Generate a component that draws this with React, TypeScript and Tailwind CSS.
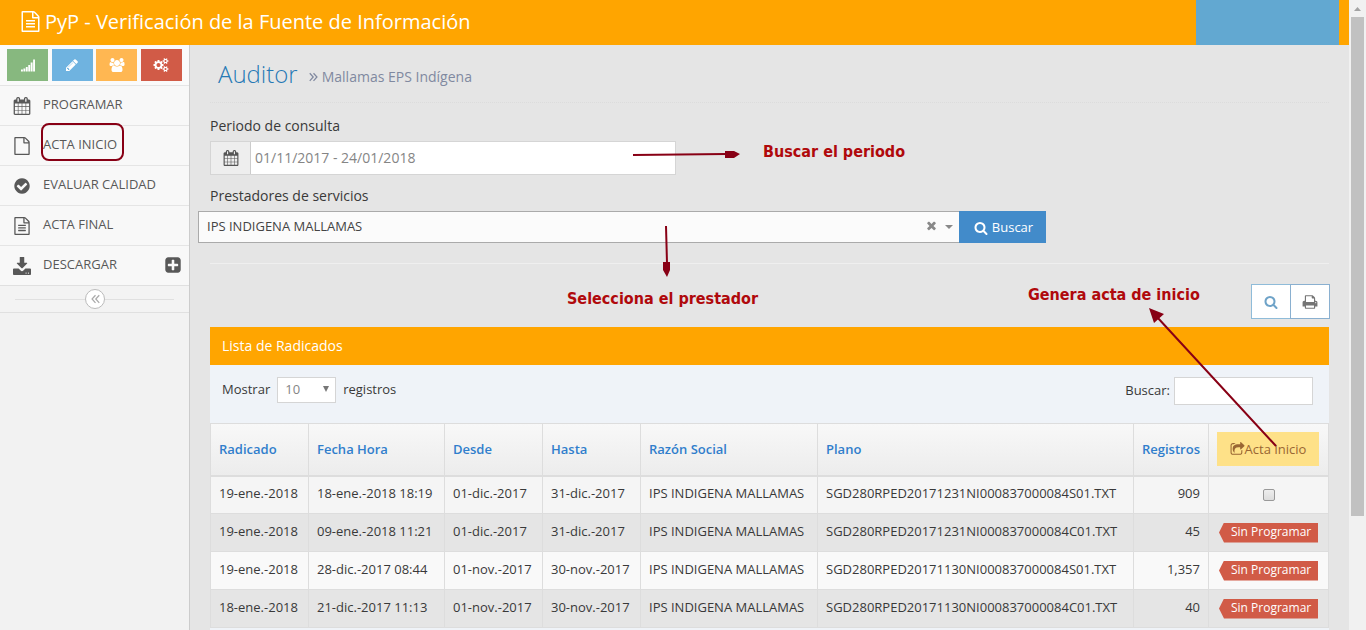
import React from "react";

const FILE =
  "M1596 380q28 28 48 76t20 88v1152q0 40-28 68t-68 28h-1344q-40 0-68-28t-28-68v-1600q0-40 28-68t68-28h896q40 0 88 20t76 48zm-444-244v376h376q-10-29-22-41l-313-313q-12-12-41-22zm384 1528v-1024h-416q-40 0-68-28t-28-68v-416h-768v1536h1280z";

const PATHS = {
  calendar:
    "M192 1664h288v-288h-288v288zm352 0h320v-288h-320v288zm-352-352h288v-320h-288v320zm352 0h320v-320h-320v320zm-352-384h288v-288h-288v288zm736 736h320v-288h-320v288zm-384-736h320v-288h-320v288zm768 736h288v-288h-288v288zm-384-352h320v-320h-320v320zm-352-864v-288q0-13-9.5-22.5t-22.5-9.5h-64q-13 0-22.5 9.5t-9.5 22.5v288q0 13 9.5 22.5t22.5 9.5h64q13 0 22.5-9.5t9.5-22.5zm736 864h288v-320h-288v320zm-384-384h320v-288h-320v288zm384 0h288v-288h-288v288zm32-480v-288q0-13-9.5-22.5t-22.5-9.5h-64q-13 0-22.5 9.5t-9.5 22.5v288q0 13 9.5 22.5t22.5 9.5h64q13 0 22.5-9.5t9.5-22.5zm384-64v1280q0 52-38 90t-90 38h-1408q-52 0-90-38t-38-90v-1280q0-52 38-90t90-38h128v-96q0-66 47-113t113-47h64q66 0 113 47t47 113v96h384v-96q0-66 47-113t113-47h64q66 0 113 47t47 113v96h128q52 0 90 38t38 90z",
  file: FILE,
  fileText:
    FILE +
    "m-1024-864q0-14 9-23t23-9h704q14 0 23 9t9 23v64q0 14-9 23t-23 9h-704q-14 0-23-9t-9-23v-64zm736 224q14 0 23 9t9 23v64q0 14-9 23t-23 9h-704q-14 0-23-9t-9-23v-64q0-14 9-23t23-9h704zm0 256q14 0 23 9t9 23v64q0 14-9 23t-23 9h-704q-14 0-23-9t-9-23v-64q0-14 9-23t23-9h704z",
  check:
    "M1412 734q0-28-18-46l-91-90q-19-19-45-19t-45 19l-408 407-226-226q-19-19-45-19t-45 19l-91 90q-18 18-18 46 0 27 18 45l362 362q19 19 45 19 27 0 46-19l543-543q18-18 18-45zm252 162q0 209-103 385.5t-279.5 279.5-385.5 103-385.5-103-279.5-279.5-103-385.5 103-385.5 279.5-279.5 385.5-103 385.5 103 279.5 279.5 103 385.5z",
  search:
    "M1216 832q0-185-131.5-316.5t-316.5-131.5-316.5 131.5-131.5 316.5 131.5 316.5 316.5 131.5 316.5-131.5 131.5-316.5zm512 832q0 52-38 90t-90 38q-54 0-90-38l-343-342q-179 124-399 124-143 0-273.5-55.5t-225-150-150-225-55.5-273.5 55.5-273.5 150-225 225-150 273.5-55.5 273.5 55.5 225 150 150 225 55.5 273.5q0 220-124 399l343 343q37 37 37 90z",
  print:
    "M448 1536h896v-256h-896v256zm0-640h896v-384h-160q-40 0-68-28t-28-68v-160h-640v640zm1152 64q0-26-19-45t-45-19-45 19-19 45 19 45 45 19 45-19 19-45zm128 0v416q0 13-9.5 22.5t-22.5 9.5h-224v160q0 40-28 68t-68 28h-960q-40 0-68-28t-28-68v-160h-224q-13 0-22.5-9.5t-9.5-22.5v-416q0-79 56.5-135.5t135.5-56.5h64v-544q0-40 28-68t68-28h672q40 0 88 20t76 48l152 152q28 28 48 76t20 88v256h64q79 0 135.5 56.5t56.5 135.5z",
  pencil:
    "M491 1536l91-91-235-235-91 91v107h128v128h107zm523-928q0-22-22-22-10 0-17 7l-542 542q-7 7-7 17 0 22 22 22 10 0 17-7l542-542q7-7 7-17zm-54-192l416 416-832 832h-416v-416zm683 96q0 53-37 90l-166 166-416-416 166-165q36-38 90-38 53 0 91 38l235 234q37 39 37 91z",
  share:
    "M1472 989v259q0 119-84.5 203.5t-203.5 84.5h-832q-119 0-203.5-84.5t-84.5-203.5v-832q0-119 84.5-203.5t203.5-84.5h255q13 0 22.5 9.5t9.5 22.5q0 27-26 32-77 26-133 60-10 4-16 4h-112q-66 0-113 47t-47 113v832q0 66 47 113t113 47h832q66 0 113-47t47-113v-214q0-19 18-29 28-13 54-37 16-16 35-8 21 9 21 29zm237-496l-384 384q-18 19-45 19-12 0-25-5-39-17-39-59v-192h-160q-323 0-438 131-119 137-74 473 3 23-20 34-8 2-12 2-16 0-26-13-10-14-21-31t-39.5-68.5-49.5-99.5-38.5-114-17.5-122q0-49 3.5-91t14-90 28-88 47-81.5 68.5-74 94.5-61.5 124.5-48.5 159.5-30.5 196.5-11h160v-192q0-42 39-59 13-5 25-5 26 0 45 19l384 384q19 19 19 45t-19 45z",
  plus:
    "M1408 960v-128q0-26-19-45t-45-19h-320v-320q0-26-19-45t-45-19h-128q-26 0-45 19t-19 45v320h-320q-26 0-45 19t-19 45v128q0 26 19 45t45 19h320v320q0 26 19 45t45 19h128q26 0 45-19t19-45v-320h320q26 0 45-19t19-45zm256-544v960q0 119-84.5 203.5t-203.5 84.5h-960q-119 0-203.5-84.5t-84.5-203.5v-960q0-119 84.5-203.5t203.5-84.5h960q119 0 203.5 84.5t84.5 203.5z",
  times:
    "M1490 1322q0 40-28 68l-136 136q-28 28-68 28t-68-28l-294-294-294 294q-28 28-68 28t-68-28l-136-136q-28-28-28-68t28-68l294-294-294-294q-28-28-28-68t28-68l136-136q28-28 68-28t68 28l294 294 294-294q28-28 68-28t68 28l136 136q28 28 28 68t-28 68l-294 294 294 294q28 28 28 68z",
  download:
    "M704 0h384q32 0 32 32v544h256q28 0 38 22t-10 46l-464 464q-44 40-88 0l-464-464q-20-24-10-46t38-22h256v-544q0-32 32-32zM96 1152h464l200 200q58 56 136 56t136-56l200-200h464q40 0 68 28t28 68v448q0 40-28 68t-68 28h-1600q-40 0-68-28t-28-68v-448q0-40 28-68t68-28zm1204 384a60 60 0 1 0 0 128a60 60 0 1 0 0-128zm240 0a60 60 0 1 0 0 128a60 60 0 1 0 0-128z",
  signal:
    "M0 1472h240v256h-240zM310 1344h240v384h-240zM620 1152h240v576h-240zM930 896h240v832h-240zM1240 576h240v1152h-240zM1550 192h240v1536h-240z",
  angles:
    "M900 250L330 896L900 1542L1040 1400L590 896L1040 392zM1460 250L890 896L1460 1542L1600 1400L1150 896L1600 392z",
  cogs:
    "M896 896q0-106-75-181t-181-75-181 75-75 181 75 181 181 75 181-75 75-181zm768 512q0-52-38-90t-90-38-90 38-38 90q0 53 37.5 90.5t90.5 37.5 90.5-37.5 37.5-90.5zm0-1024q0-52-38-90t-90-38-90 38-38 90q0 53 37.5 90.5t90.5 37.5 90.5-37.5 37.5-90.5zm-384 421v185q0 10-7 19.5t-16 10.5l-155 24q-11 35-32 76 34 48 90 115 7 11 7 20 0 12-7 19-23 30-82.5 89.5t-78.5 59.5q-11 0-21-7l-115-90q-37 19-77 31-11 108-23 155-7 24-30 24h-186q-11 0-20-7.5t-10-17.5l-23-153q-34-10-75-31l-118 89q-7 7-20 7-11 0-21-8-144-133-144-160 0-9 7-19 10-14 41-53t47-61q-23-44-35-82l-152-24q-10-1-17-9.5t-7-19.5v-185q0-10 7-19.5t16-10.5l155-24q11-35 32-76-34-48-90-115-7-11-7-20 0-12 7-20 22-30 82-89t79-59q11 0 21 7l115 90q34-18 77-32 11-108 23-154 7-24 30-24h186q11 0 20 7.5t10 17.5l23 153q34 10 75 31l118-89q8-7 20-7 11 0 21 8 144 133 144 160 0 8-7 19-12 16-42 54t-45 60q23 48 34 82l152 23q10 2 17 10.5t7 19.5zm640 533v140q0 16-149 31-12 27-30 52 51 113 51 138 0 4-4 7-122 71-124 71-8 0-46-47t-52-68q-20 2-30 2t-30-2q-14 21-52 68t-46 47q-2 0-124-71-4-3-4-7 0-25 51-138-18-25-30-52-149-15-149-31v-140q0-16 149-31 13-29 30-52-51-113-51-138 0-4 4-7 4-2 35-20t59-34 30-16q8 0 46 46.5t52 67.5q20-2 30-2t30 2q51-71 92-112l6-2q4 0 124 70 4 3 4 7 0 25-51 138 17 23 30 52 149 15 149 31zm0-1024v140q0 16-149 31-12 27-30 52 51 113 51 138 0 4-4 7-122 71-124 71-8 0-46-47t-52-68q-20 2-30 2t-30-2q-14 21-52 68t-46 47q-2 0-124-71-4-3-4-7 0-25 51-138-18-25-30-52-149-15-149-31v-140q0-16 149-31 13-29 30-52-51-113-51-138 0-4 4-7 4-2 35-20t59-34 30-16q8 0 46 46.5t52 67.5q20-2 30-2t30 2q51-71 92-112l6-2q4 0 124 70 4 3 4 7 0 25-51 138 17 23 30 52 149 15 149 31z",
  users:
    "M593 896q-162 5-265 128h-134q-82 0-138-40.5t-56-118.5q0-353 124-353 6 0 43.5 21t97.5 42.5 119 21.5q67 0 133-23-5 37-5 66 0 159 93 287zm1071 637q0 120-73 189.5t-194 69.5h-874q-121 0-194-69.5t-73-189.5q0-53 3.5-103.5t14-109 26.5-108.5 43-97.5 62-81 85.5-53.5 111.5-20q10 0 43 21.5t73 48 107 48 135 21.5 135-21.5 107-48 73-48 43-21.5q61 0 111.5 20t85.5 53.5 62 81 43 97.5 26.5 108.5 14 109 3.5 103.5zm-1024-1277q0 106-75 181t-181 75-181-75-75-181 75-181 181-75 181 75 75 181zm704 384q0 159-112.5 271.5t-271.5 112.5-271.5-112.5-112.5-271.5 112.5-271.5 271.5-112.5 271.5 112.5 112.5 271.5zm576 225q0 78-56 118.5t-138 40.5h-134q-103-123-265-128 93-128 93-287 0-29-5-66 66 23 133 23 59 0 119-21.5t97.5-42.5 43.5-21q124 0 124 353zm-128-609q0 106-75 181t-181 75-181-75-75-181 75-181 181-75 181 75 75 181z",
};

type IconName = keyof typeof PATHS;

function Icon({ name, className }: { name: IconName; className: string }) {
  const wide = name === "cogs" || name === "users";
  return (
    <svg
      viewBox={wide ? "0 0 1920 1792" : "0 0 1792 1792"}
      fill="currentColor"
      fillRule={name === "download" ? "evenodd" : "nonzero"}
      className={`shrink-0 ${className}`}
      aria-hidden="true"
    >
      <path d={PATHS[name]} />
    </svg>
  );
}

const shortcuts: { icon: IconName; label: string; color: string }[] = [
  { icon: "signal", label: "Estadísticas", color: "bg-[#87b87f]" },
  { icon: "pencil", label: "Editar", color: "bg-[#6fb3e0]" },
  { icon: "users", label: "Usuarios", color: "bg-[#ffb752]" },
  { icon: "cogs", label: "Configuración", color: "bg-[#d15b47]" },
];

const menu: { icon: IconName; label: string }[] = [
  { icon: "calendar", label: "PROGRAMAR" },
  { icon: "file", label: "ACTA INICIO" },
  { icon: "check", label: "EVALUAR CALIDAD" },
  { icon: "fileText", label: "ACTA FINAL" },
  { icon: "download", label: "DESCARGAR" },
];

const rows = [
  ["19-ene.-2018", "18-ene.-2018 18:19", "01-dic.-2017", "31-dic.-2017", "IPS INDIGENA MALLAMAS", "SGD280RPED20171231NI000837000084S01.TXT", "909"],
  ["19-ene.-2018", "09-ene.-2018 11:21", "01-dic.-2017", "31-dic.-2017", "IPS INDIGENA MALLAMAS", "SGD280RPED20171231NI000837000084C01.TXT", "45"],
  ["19-ene.-2018", "28-dic.-2017 08:44", "01-nov.-2017", "30-nov.-2017", "IPS INDIGENA MALLAMAS", "SGD280RPED20171130NI000837000084S01.TXT", "1,357"],
  ["18-ene.-2018", "21-dic.-2017 11:13", "01-nov.-2017", "30-nov.-2017", "IPS INDIGENA MALLAMAS", "SGD280RPED20171130NI000837000084C01.TXT", "40"],
];
const rowColors = ["bg-[#f5f5f5]", "bg-[#e5e5e5]", "bg-[#f9f9f9]", "bg-[#e5e5e5]"];
const headings = ["Radicado", "Fecha Hora", "Desde", "Hasta", "Razón Social", "Plano", "Registros"];

function Sidebar() {
  return (
    <nav className="w-[190px] shrink-0 border-r border-[#ccc] bg-[#f2f2f2]">
      <div className="flex h-10 items-center justify-between bg-[#fafafa] px-[7px]">
        {shortcuts.map((s) => (
          <button key={s.label} aria-label={s.label} className={`flex h-8 w-[41px] items-center justify-center text-white ${s.color}`}>
            <Icon name={s.icon} className={s.icon === "users" || s.icon === "cogs" ? "h-[14px] w-4" : "h-[14px] w-[14px]"} />
          </button>
        ))}
      </div>
      <ul>
        {menu.map((m) => (
          <li key={m.label} className="border-t border-[#e5e5e5] bg-[#f8f8f8]">
            <a href="#" className="flex h-[39px] items-center pr-[7px] pb-px pl-[13px] text-[13px] text-[#585858]">
              <Icon name={m.icon} className="mt-px h-[18px] w-[18px]" />
              <span className="ml-3 flex-1">{m.label}</span>
              {m.label === "DESCARGAR" && <Icon name="plus" className="h-[18px] w-[18px]" />}
            </a>
          </li>
        ))}
      </ul>
      <div className="flex h-7 items-center border-y border-[#e0e0e0] bg-[#f3f3f3] px-[15px]">
        <span className="h-px flex-1 bg-[#e0e0e0]" />
        <button aria-label="Contraer menú" className="flex h-5 w-5 items-center justify-center rounded-full border border-[#bbb] bg-white text-[#aaa]">
          <Icon name="angles" className="h-3 w-3" />
        </button>
        <span className="h-px flex-1 bg-[#e0e0e0]" />
      </div>
    </nav>
  );
}

function Filters() {
  return (
    <form>
      <label htmlFor="periodo" className="block h-[22px] text-sm leading-[22px]">Periodo de consulta</label>
      <div className="mt-1 flex h-[34px] w-[466px] border border-[#d5d5d5]">
        <span className="flex w-10 items-center justify-center border-r border-[#ccc] bg-[#eee] pb-px text-[#555]">
          <Icon name="calendar" className="h-4 w-4" />
        </span>
        <input id="periodo" defaultValue="01/11/2017 - 24/01/2018" className="min-w-0 flex-1 bg-white px-1 text-sm text-[#858585] outline-none" />
      </div>
      <label htmlFor="prestador" className="mt-[10px] block h-[22px] text-sm leading-[22px]">Prestadores de servicios</label>
      <div className="mt-1 -ml-3 flex h-8 w-[848px]">
        <div className="relative flex flex-1">
          <select id="prestador" className="w-full appearance-none border border-r-0 border-[#aaa] bg-[#fbfbfb] px-2 text-[13px] text-[#444]">
            <option>IPS INDIGENA MALLAMAS</option>
          </select>
          <div className="pointer-events-none absolute inset-y-0 right-[6px] flex items-center gap-[7px] text-[#888]">
            <button type="button" aria-label="Quitar prestador" className="pointer-events-auto pb-1">
              <Icon name="times" className="h-[13px] w-[13px]" />
            </button>
            <svg viewBox="0 0 8 4" className="h-1 w-2 fill-current" aria-hidden="true"><path d="M0 0h8L4 4z" /></svg>
          </div>
        </div>
        <button type="button" className="flex w-[87px] items-center justify-center gap-1 bg-[#428bca] pt-px pl-[2px] text-[13px] text-white">
          <Icon name="search" className="h-[14px] w-[14px]" />
          Buscar
        </button>
      </div>
    </form>
  );
}

function Records() {
  return (
    <section>
      <h2 className="h-[38px] bg-[#ffa500] pl-3 text-sm leading-[38px] text-white">Lista de Radicados</h2>
      <div className="flex h-[58px] items-start justify-between bg-[#eff3f8] pt-3 pr-4 pl-3 text-[13px]">
        <label className="flex items-center gap-[7px]">
          Mostrar
          <span className="relative flex">
            <select className="h-[26px] w-[59px] appearance-none border border-[#d5d5d5] bg-white px-[7px] text-[13px] text-[#858585]">
              <option>10</option>
            </select>
            <svg viewBox="0 0 6 6" className="pointer-events-none absolute top-[9px] right-[7px] h-[6px] w-[6px] fill-[#777]" aria-hidden="true"><path d="M0 0h6L3 6z" /></svg>
          </span>
          registros
        </label>
        <label className="flex items-center gap-1">
          Buscar:
          <input className="h-7 w-[139px] border border-[#d5d5d5] bg-white px-1 outline-none" />
        </label>
      </div>
      <table className="w-full table-fixed border-collapse bg-[#eff3f8] text-[13px] text-[#393939]">
        <colgroup>
          <col className="w-[98px]" />
          <col className="w-[136px]" />
          <col className="w-[98px]" />
          <col className="w-[98px]" />
          <col className="w-[177px]" />
          <col />
          <col className="w-[75px]" />
          <col className="w-[120px]" />
        </colgroup>
        <thead>
          <tr className="h-[52px] bg-linear-to-b from-[#f8f8f8] to-[#ececec]">
            {headings.map((h) => (
              <th key={h} className="border border-b-2 border-[#ddd] px-2 text-left font-semibold text-[#307ecc]">{h}</th>
            ))}
            <th className="border border-b-2 border-[#ddd] px-2 font-normal">
              <button className="flex h-[34px] w-[102px] items-center justify-center bg-[#fee188] text-[#996633]">
                <Icon name="share" className="h-[15px] w-[15px]" />
                Acta Inicio
              </button>
            </th>
          </tr>
        </thead>
        <tbody>
          {rows.map((r, i) => (
            <tr key={r[5]} className={`h-[38px] ${rowColors[i]}`}>
              {r.map((c, j) => (
                <td key={j} className={`border border-[#ddd] px-2 pb-[2px] whitespace-nowrap ${j === 6 ? "text-right" : ""}`}>{c}</td>
              ))}
              <td className="border border-[#ddd] px-[10px]">
                {i === 0 ? (
                  <input type="checkbox" aria-label="Seleccionar radicado" className="mx-auto block h-3 w-3 appearance-none rounded-xs border border-[#999] bg-linear-to-b from-[#eee] to-[#ddd]" />
                ) : (
                  <span className="flex h-5 items-center bg-[#d15b47] pb-[2px] pl-3 text-xs whitespace-nowrap text-white [clip-path:polygon(5px_0,100%_0,100%_100%,5px_100%,0_50%)]">Sin Programar</span>
                )}
              </td>
            </tr>
          ))}
        </tbody>
      </table>
      <div className="h-10 bg-[#eff3f8]" />
    </section>
  );
}

function Annotations() {
  return (
    <div className="pointer-events-none absolute inset-0 font-['DejaVu_Sans_Condensed','DejaVu_Sans',sans-serif] text-base leading-5 font-bold whitespace-nowrap text-[#b0090c]">
      <div className="absolute top-[123px] left-[41px] h-[38px] w-[83px] rounded-lg border-2 border-[#880015]" />
      <svg className="absolute top-0 left-0 h-[630px] w-[1349px]" fill="#880015" stroke="#880015" strokeWidth="2" aria-hidden="true">
        <path d="M633 155L726 154M666 226L667 263M1276 446L1157 317" />
        <path stroke="none" d="M725 151h9l6 3l-6 4h-9zM663 262h7v8l-3 7l-4-7zM1149 308l15 6l-10 9z" />
      </svg>
      <p className="absolute top-[142px] left-[763px]">Buscar el periodo</p>
      <p className="absolute top-[289px] left-[567px]">Selecciona el prestador</p>
      <p className="absolute top-[285px] left-[1028px]">Genera acta de inicio</p>
    </div>
  );
}

export default function App() {
  return (
    <div className="relative flex h-screen overflow-hidden bg-[#e5e5e5] font-['Open_Sans',sans-serif] text-[#393939]">
      <div className="flex min-w-0 flex-1 flex-col">
        <header className="flex h-[45px] shrink-0 items-center justify-between bg-[#ffa500] pr-[10px] pl-5 text-white">
          <a href="#" className="flex items-center gap-1 pb-[2px] text-xl">
            <Icon name="fileText" className="h-[21px] w-[21px]" />
            PyP - Verificación de la Fuente de Información
          </a>
          <div className="h-full w-[143px] bg-[#62a8d1]" />
        </header>
        <div className="flex min-h-0 flex-1">
          <Sidebar />
          <main className="min-w-0 flex-1 overflow-hidden px-5 pt-2">
            <div className="flex h-[50px] items-baseline border-b border-dotted border-[#dcdcdc] pl-2">
              <h1 className="font-['Open_Sans_Light','Open_Sans',sans-serif] text-2xl leading-[42px] font-light text-[#2679b5]">Auditor</h1>
              <p className="ml-[10px] flex items-center gap-[2px] text-sm text-[#8089a0]">
                <Icon name="angles" className="h-3 w-3 rotate-180" />
                Mallamas EPS Indígena
              </p>
            </div>
            <div className="pt-3">
              <Filters />
            </div>
            <hr className="mt-5 border-[#efefef]" />
            <div className="mt-5 mb-2 -mr-px flex h-[35px] justify-end">
              <button aria-label="Buscar en la lista" className="flex w-10 items-center justify-center border border-[#8fbcd9] bg-white text-[#6fa3c8]">
                <Icon name="search" className="h-[14px] w-[14px]" />
              </button>
              <button aria-label="Imprimir" className="-ml-px flex w-10 items-center justify-center border border-[#8ab0d0] bg-white text-[#757575]">
                <Icon name="print" className="h-4 w-4" />
              </button>
            </div>
            <Records />
          </main>
        </div>
      </div>
      <div className="flex w-[17px] shrink-0 flex-col items-center bg-[#f1f1f1]" aria-hidden="true">
        <svg viewBox="0 0 17 17" className="h-[17px] w-[17px] fill-[#a3a3a3]"><path d="M5 11h7L8.500 7z" /></svg>
        <div className="h-[499px] w-[13px] bg-[#c1c1c1]" />
      </div>
      <Annotations />
    </div>
  );
}
